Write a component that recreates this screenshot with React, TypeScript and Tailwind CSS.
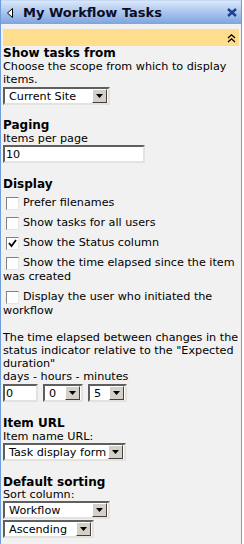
import React from 'react'

const font = "font-['Verdana','DejaVu_Sans',sans-serif]"

function Arrow() {
  return (
    <span className="flex h-[14px] w-[15px] shrink-0 items-center justify-center border border-t-white border-l-white border-r-[#404040] border-b-[#404040] bg-[#d4d0c8]">
      <svg width="7" height="4" viewBox="0 0 7 4">
        <polygon points="0,0 7,0 3.5,4" fill="#000" />
      </svg>
    </span>
  )
}

function Select({ value, width }: { value: string; width: string }) {
  return (
    <div
      className={`flex h-[18px] items-center border-2 border-t-[#5f5f5f] border-l-[#5f5f5f] border-r-[#e4e2dc] border-b-[#e4e2dc] bg-white pr-[1px] ${width}`}
    >
      <span className="flex-1 truncate pl-[4px] leading-[13px]">{value}</span>
      <Arrow />
    </div>
  )
}

function TextBox({ value, width }: { value: string; width: string }) {
  return (
    <div
      className={`flex h-[18px] items-center border-2 border-t-[#5f5f5f] border-l-[#5f5f5f] border-r-[#e4e2dc] border-b-[#e4e2dc] bg-white pl-[1px] ${width}`}
    >
      <span className="leading-[13px]">{value}</span>
    </div>
  )
}

function Check({ checked = false, children }: { checked?: boolean; children: React.ReactNode }) {
  return (
    <div className="pt-[5px] pb-[1px] leading-[14px]">
      <span className="mt-[1px] mr-[4px] ml-[3px] inline-flex h-[13px] w-[13px] items-center justify-center border border-t-[#808080] border-l-[#808080] border-r-[#e8e6e0] border-b-[#e8e6e0] bg-white align-top">
        {checked && (
          <svg width="9" height="9" viewBox="0 0 9 9">
            <polyline points="1,4 3.5,7 8,1" fill="none" stroke="#000" strokeWidth="1.8" />
          </svg>
        )}
      </span>
      {children}
    </div>
  )
}

export default function App() {
  return (
    <div className={`h-[544px] w-[244px] overflow-hidden bg-white ${font} text-[11.2px] text-black`}>
      <div className="h-full w-[242px] border-x border-[#6f9dd9] bg-[#f1f1f1]">
        {/* Header */}
        <div className="flex h-[24px] items-center border-t border-[#c5d9f5] bg-gradient-to-b from-[#dbe7f8] via-[#a9c5ee] to-[#7da4df] pr-[4px] pl-[6px]">
          <svg width="6" height="10" viewBox="0 0 6 10" className="mr-[10px]">
            <polygon points="5.5,0.5 5.5,9.5 0.5,5" fill="#fff" stroke="#000" strokeWidth="1" />
          </svg>
          <span className="flex-1 text-[13px] font-bold text-[#0c0c24]">My Workflow Tasks</span>
          <svg width="10" height="9" viewBox="0 0 10 9">
            <path d="M1 1 L9 8 M9 1 L1 8" stroke="#1e3f8f" strokeWidth="2.4" />
          </svg>
        </div>

        {/* Toolbar */}
        <div className="mx-[2px] mt-[5px] flex h-[17px] items-end justify-end bg-[#fedd8c] pr-[3px] pb-[3px]">
          <svg width="9" height="9" viewBox="0 0 9 9">
            <polyline points="1,4 4.5,0.8 8,4" fill="none" stroke="#000" strokeWidth="1.3" />
            <polyline points="1,8 4.5,4.8 8,8" fill="none" stroke="#000" strokeWidth="1.3" />
          </svg>
        </div>

        <div className="pl-[2px] leading-[13px]">
          <div className="text-[12px] font-bold leading-[14px]">Show tasks from</div>
          <div>Choose the scope from which to display items.</div>
          <div className="mt-[1px]">
            <Select value="Current Site" width="w-[107px]" />
          </div>

          <div className="mt-[14px] text-[12px] font-bold leading-[13px]">Paging</div>
          <div>Items per page</div>
          <div>
            <TextBox value="10" width="w-[142px]" />
          </div>

          <div className="mt-[15px] text-[12px] font-bold leading-[13px]">Display</div>
          <div>
            <Check>Prefer filenames</Check>
            <Check>Show tasks for all users</Check>
            <Check checked>Show the Status column</Check>
            <Check>Show the time elapsed since the item was created</Check>
            <Check>Display the user who initiated the workflow</Check>
          </div>

          <div className="mt-[12px]">
            The time elapsed between changes in the status indicator relative to the "Expected
            duration"
          </div>
          <div>days - hours - minutes</div>
          <div className="mt-[1px] flex gap-[5px]">
            <TextBox value="0" width="w-[35px]" />
            <Select value="0" width="w-[40px]" />
            <Select value="5" width="w-[39px]" />
          </div>

          <div className="mt-[15px] text-[12px] font-bold leading-[13px]">Item URL</div>
          <div>Item name URL:</div>
          <div>
            <Select value="Task display form" width="w-[123px]" />
          </div>

          <div className="mt-[15px] text-[12px] font-bold leading-[12px]">Default sorting</div>
          <div>Sort column:</div>
          <div>
            <Select value="Workflow" width="w-[107px]" />
          </div>
          <div className="mt-[1px]">
            <Select value="Ascending" width="w-[91px]" />
          </div>
        </div>
      </div>
    </div>
  )
}
